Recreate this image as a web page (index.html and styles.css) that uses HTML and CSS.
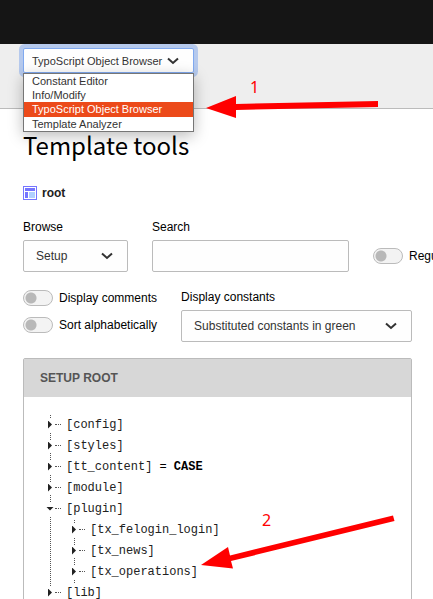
FILE: index.html
```html
<!DOCTYPE html>
<html lang="en">
<head>
<meta charset="utf-8">
<title>Template tools</title>
<link rel="stylesheet" href="styles.css">
</head>
<body>
<div class="topbar"></div>
<header class="docheader">
  <div class="select select-module">
    <select class="control" aria-label="Module function">
      <option>Constant Editor</option>
      <option>Info/Modify</option>
      <option selected>TypoScript Object Browser</option>
      <option>Template Analyzer</option>
    </select>
    <svg class="chevron" viewBox="0 0 12 8"><path d="M1 1.5 6 6 11 1.5"/></svg>
    <ul class="menu" role="listbox" aria-label="Module functions">
      <li role="option">Constant Editor</li>
      <li role="option">Info/Modify</li>
      <li class="selected" role="option" aria-selected="true">TypoScript Object Browser</li>
      <li role="option">Template Analyzer</li>
    </ul>
  </div>
</header>
<main class="module">
  <h1>Template tools</h1>
  <div class="page-name">
    <svg class="page-icon" viewBox="0 0 14 14"><path fill="#7575ff" d="M0 0h14v14H0z"/><path fill="#fff" d="M1 1h12v12H1z"/><path fill="#7575ff" d="M2 2h10v3H2zM2 6h3v6H2z"/><path fill="#b0d0ff" d="M6 6h6v6H6z"/></svg>
    <strong>root</strong>
  </div>
  <form>
    <div class="form-row">
      <div class="field field-browse">
        <label for="browse">Browse</label>
        <div class="select">
          <select class="control" id="browse"><option>Setup</option><option>Constants</option></select>
          <svg class="chevron" viewBox="0 0 12 8"><path d="M1 1.5 6 6 11 1.5"/></svg>
        </div>
      </div>
      <div class="field field-search">
        <label for="search">Search</label>
        <input class="control" type="text" id="search">
      </div>
      <label class="switch switch-inline"><input type="checkbox">Regular expression</label>
    </div>
    <div class="form-row form-row-options">
      <div class="switches">
        <label class="switch"><input type="checkbox">Display comments</label>
        <label class="switch"><input type="checkbox">Sort alphabetically</label>
      </div>
      <div class="field field-constants">
        <label for="constants">Display constants</label>
        <div class="select">
          <select class="control" id="constants"><option>Substituted constants in green</option></select>
          <svg class="chevron" viewBox="0 0 12 8"><path d="M1 1.5 6 6 11 1.5"/></svg>
        </div>
      </div>
    </div>
  </form>
  <section class="panel">
    <h2>SETUP ROOT</h2>
    <ul class="tree">
      <li><div class="node"><button class="caret" aria-label="Expand config"></button><a href="#config">[config]</a></div></li>
      <li><div class="node"><button class="caret" aria-label="Expand styles"></button><a href="#styles">[styles]</a></div></li>
      <li><div class="node"><button class="caret" aria-label="Expand tt_content"></button><a href="#tt_content">[tt_content]</a><span class="value">= <b>CASE</b></span></div></li>
      <li><div class="node"><button class="caret" aria-label="Expand module"></button><a href="#module">[module]</a></div></li>
      <li><div class="node"><button class="caret open" aria-label="Collapse plugin"></button><a href="#plugin">[plugin]</a></div>
        <ul class="tree">
          <li><div class="node"><button class="caret" aria-label="Expand tx_felogin_login"></button><a href="#tx_felogin_login">[tx_felogin_login]</a></div></li>
          <li><div class="node"><button class="caret" aria-label="Expand tx_news"></button><a href="#tx_news">[tx_news]</a></div></li>
          <li><div class="node"><button class="caret" aria-label="Expand tx_operations"></button><a href="#tx_operations">[tx_operations]</a></div></li>
        </ul>
      </li>
      <li><div class="node"><button class="caret" aria-label="Expand lib"></button><a href="#lib">[lib]</a></div></li>
    </ul>
  </section>
</main>
<svg class="annotations" width="433" height="599" viewBox="0 0 433 599">
  <path d="M206 108 236 96V104L378 101V107L236 110V118Z"/>
  <path d="M201 565 228 547 230 555.500 393 515.500 394.500 521 231 561 233 568.500Z"/>
  <text x="250" y="93">1</text>
  <text x="262" y="526">2</text>
</svg>
</body>
</html>
```
FILE: styles.css
```css
* {
  box-sizing: border-box;
}

html {
  height: 100%;
  overflow: hidden;
}

body {
  position: relative;
  height: 100%;
  margin: 0;
  overflow: hidden;
  background: #fff;
  color: #000;
  font: 12px/18px "Liberation Sans", Arial, sans-serif;
}

h1,
h2,
ul {
  margin: 0;
  padding: 0;
}

ul {
  list-style: none;
}

.topbar {
  height: 44px;
  background: #151515;
}

.docheader {
  height: 65px;
  padding: 4px 23px;
  border-bottom: 1px solid #bbb;
  background: #eee;
}

.control {
  width: 100%;
  height: 32px;
  margin: 0;
  padding: 0 12px;
  border: 1px solid #bbb;
  border-radius: 2px;
  outline: 0;
  appearance: none;
  background: #fefefe;
  color: #333;
  font: inherit;
}

.select {
  position: relative;
  display: grid;
  align-items: center;
}

.select > .control,
.chevron {
  grid-area: 1 / 1;
}

.chevron {
  justify-self: end;
  width: 12px;
  height: 8px;
  margin-right: 15px;
  fill: none;
  stroke: #333;
  stroke-width: 2;
  pointer-events: none;
}

.select-module {
  width: 171px;
  font-size: 11px;
}

.select-module .control {
  height: 25px;
  padding: 0 8px;
  border-color: #80a9ef;
  box-shadow: 0 0 0 4px #b5c9ed;
}

.menu {
  position: absolute;
  z-index: 1;
  top: 25px;
  left: 0;
  width: 100%;
  border: 1px solid #767676;
  background: #fff;
  box-shadow: 0 4px 14px #0004;
  color: #333;
  line-height: 14px;
}

.menu li {
  padding-left: 8px;
}

.menu .selected {
  background: #ec4a1a;
  color: #fff;
  line-height: 15px;
}

.module {
  padding: 18px 21px 0 23px;
}

h1 {
  font: 400 24px/36px "Noto Sans CJK SC", "Open Sans", sans-serif;
}

.page-name {
  display: flex;
  align-items: center;
  gap: 5px;
  margin-top: 21px;
  color: #212121;
}

.page-icon {
  width: 14px;
  height: 14px;
}

.form-row {
  display: flex;
  gap: 24px;
  margin-top: 16px;
}

.field > label {
  display: block;
  margin-bottom: 4px;
}

.field-browse {
  flex: 0 0 105px;
}

.field-search {
  flex: 0 0 197px;
}

.field-constants {
  flex: 0 0 231px;
}

.switch {
  display: flex;
  align-items: center;
  gap: 6px;
  height: 18px;
  white-space: nowrap;
}

.switch input {
  flex: none;
  width: 30px;
  height: 16px;
  margin: 0;
  border: 1px solid #bbb;
  border-radius: 8px;
  appearance: none;
  background: radial-gradient(circle at 7px 7px, #b8b8b8 5px, #f3f3f3 6px);
}

.switch-inline {
  margin-top: 29px;
}

.switches {
  display: grid;
  align-content: start;
  gap: 9px;
  padding-top: 1px;
}

.panel {
  margin-top: 16px;
  border: 1px solid #bbb;
  border-radius: 2px;
}

h2 {
  padding: 10px 16px;
  background: #d7d7d7;
  color: #555;
  font-size: 12px;
  line-height: 18px;
}

.tree {
  background: repeating-linear-gradient(#555 0 1px, transparent 1px 2px) 3px 0 / 1px 100% no-repeat;
}

.tree .tree {
  margin-left: 24px;
}

.panel > .tree {
  margin: 18px 23px;
  font: 12px/21px "Liberation Mono", "Courier New", monospace;
}

.node {
  display: flex;
  align-items: center;
  height: 21px;
}

.node a {
  color: #212121;
  text-decoration: none;
}

.node a::before {
  display: inline-block;
  width: 6px;
  margin: 0 5px 3px 1px;
  border-bottom: 1px dotted #555;
  content: "";
}

.caret {
  display: grid;
  flex: none;
  place-content: center start;
  width: 7px;
  height: 13px;
  padding: 0 0 2px;
  border: 0;
  background: #fff;
}

.caret::before {
  width: 4px;
  height: 8px;
  margin-left: 1px;
  background: #212121;
  clip-path: polygon(0 0, 100% 50%, 0 100%);
  content: "";
}

.caret.open::before {
  width: 8px;
  height: 4px;
  margin-left: -1px;
  clip-path: polygon(0 0, 100% 0, 50% 100%);
}

.value {
  margin-left: 7px;
  color: #000;
}

.annotations {
  position: absolute;
  z-index: 2;
  top: 0;
  left: 0;
  fill: #f00;
  font: 16px "Noto Sans", sans-serif;
  pointer-events: none;
}
```
